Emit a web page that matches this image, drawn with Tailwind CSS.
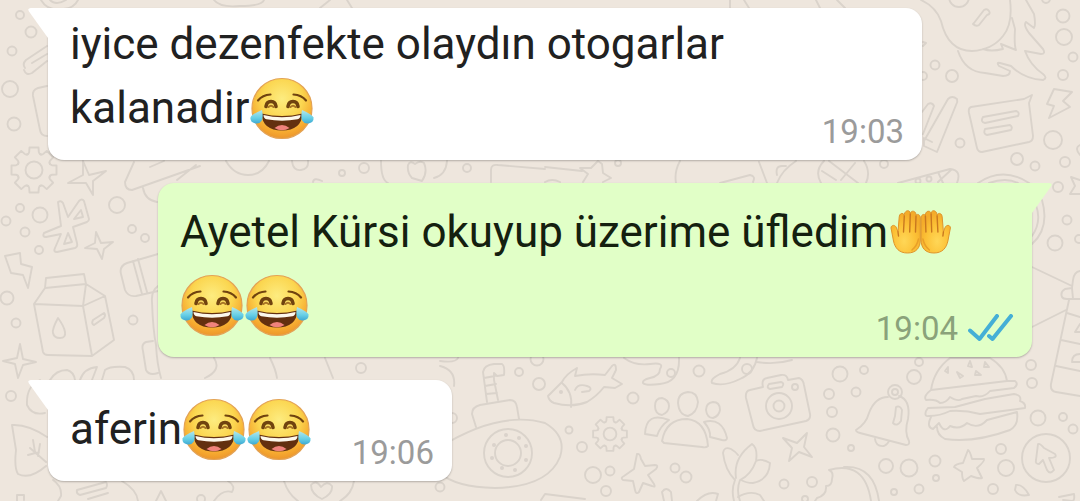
<!DOCTYPE html>
<html lang="tr">
<head>
    <meta charset="UTF-8">
    <meta name="viewport" content="width=device-width, initial-scale=1.0">
    <script src="https://cdn.jsdelivr.net/npm/@tailwindcss/browser@4"></script>
    <title>Sohbet</title>
</head>

<body class="bg-[#eee6dd] min-h-screen overflow-hidden relative font-['Roboto',sans-serif] text-[44px] leading-[51px] text-[#212121]">

    <!-- shared drawings -->
    <svg class="absolute w-0 h-0" aria-hidden="true">
        <defs>
            <radialGradient id="skin" cx="50%" cy="34%" r="68%">
                <stop offset="0" stop-color="#fdec80"/>
                <stop offset=".5" stop-color="#fbd650"/>
                <stop offset=".82" stop-color="#f6a92f"/>
                <stop offset="1" stop-color="#ea922c"/>
            </radialGradient>
            <linearGradient id="tear" x1="0" y1="0" x2="0" y2="1">
                <stop offset="0" stop-color="#b5e6ea"/>
                <stop offset=".6" stop-color="#66cfe6"/>
                <stop offset="1" stop-color="#3fa9d2"/>
            </linearGradient>
            <radialGradient id="palm" cx="45%" cy="72%" r="65%">
                <stop offset="0" stop-color="#ffd757"/>
                <stop offset=".6" stop-color="#fcc136"/>
                <stop offset="1" stop-color="#f4ac2a"/>
            </radialGradient>
        </defs>
        <symbol id="joy" viewBox="0 0 65 73">
            <circle cx="32" cy="38.500" r="30" fill="url(#skin)" stroke="#e3a255" stroke-width="1.200"/>
            <g fill="none" stroke="#70430f" stroke-linecap="round">
                <path d="M8 30.500Q12.500 25 20.500 24.500M56 30.500Q51.500 25 43.500 24.500" stroke-width="2.200"/>
                <path d="M16 36.500Q16.500 31.500 21 31.500T26 36.500M38 36.500Q38.500 31.500 43 31.500T48 36.500" stroke-width="3.600"/>
                <path d="M18.500 37Q21 34.500 23.500 37M40.500 37Q43 34.500 45.500 37" stroke-width="1.800" stroke="#a87526"/>
            </g>
            <path d="M11.500 43.500Q32 48.500 52.500 43.500Q51.500 60.500 32 60.500T11.500 43.500Z" fill="#63300f"/>
            <path d="M13.500 45Q32 49.500 50.500 45Q50.500 48.500 47.500 49.300Q32 52 16.500 49.300Q13.500 48.500 13.500 45Z" fill="#fdf8ec"/>
            <path d="M24.500 58Q32 52 39.500 58Q36 60.200 32 60.200T24.500 58Z" fill="#f0837c"/>
            <path d="M12 40Q13.500 47 11.800 50.500A6 5.500 0 0 1 .5 47.500Q1.500 44.500 12 40Z" fill="url(#tear)"/>
            <path d="M12 40Q13.500 47 11.800 50.500A6 5.500 0 0 1 .5 47.500Q1.500 44.500 12 40Z" fill="url(#tear)" transform="translate(64 0) scale(-1 1)"/>
        </symbol>
        <symbol id="hands" viewBox="0 0 65 73">
            <g id="hand">
                <path d="M3 34C3 30.500 7.500 30.500 8.500 34L10 38L11.200 23C11.400 18.500 16 18.500 16.200 21.500C16.500 15.500 22.300 15.500 22.300 19.500C23 16 28 16.500 28 21C30 19.500 32.300 21 32.300 24V46C32.300 54 28 59 19.500 59C11 59 7 54 5.500 47Z" fill="url(#palm)" stroke="#df942b" stroke-width="1"/>
                <path d="M16.300 22L15.500 38M22.300 20L21.700 38M28 22L27.500 38M10 38L10.500 42" fill="none" stroke="#c9781f" stroke-width="1.400" stroke-linecap="round"/>
                <path d="M24 56Q29 52 30.500 45" fill="none" stroke="#e9a028" stroke-width="1.500" stroke-linecap="round"/>
            </g>
            <use href="#hand" transform="translate(65.400 0) scale(-1 1)"/>
        </symbol>
        <symbol id="gear" viewBox="-24 -24 48 48" overflow="visible">
            <path id="tooth" d="M-7-15.500Q-5-16-4.800-18L-4.500-22.500H4.500L4.800-18Q5-16 7-15.500"/>
            <use href="#tooth" transform="rotate(45)"/><use href="#tooth" transform="rotate(90)"/>
            <use href="#tooth" transform="rotate(135)"/><use href="#tooth" transform="rotate(180)"/>
            <use href="#tooth" transform="rotate(225)"/><use href="#tooth" transform="rotate(270)"/>
            <use href="#tooth" transform="rotate(315)"/>
            <circle r="8.500"/>
        </symbol>
        <symbol id="tail" viewBox="0 0 21 32">
            <path d="M21 0H3Q-1 0 1 3.500L20 30H21Z" fill="currentColor"/>
        </symbol>
    </svg>

    <!-- wallpaper doodles -->
    <svg class="absolute top-0 left-0 w-[1080px] h-[501px]" viewBox="0 0 1080 501" fill="none" stroke="#dad3cb" stroke-width="1.900" stroke-linejoin="round" stroke-linecap="round" aria-hidden="true">
        <!-- bubbles, left side -->
        <circle cx="20" cy="15" r="4"/><circle cx="31" cy="32" r="5.500"/><circle cx="12" cy="51" r="4.500"/>
        <circle cx="10" cy="89" r="8"/><circle cx="14" cy="124" r="6.500"/>
        <circle cx="20" cy="208" r="4"/><circle cx="40" cy="215" r="7.500"/><circle cx="6" cy="221" r="4.500"/>
        <circle cx="25" cy="232" r="4.500"/><circle cx="39" cy="250" r="4"/><circle cx="117" cy="205" r="8"/>
        <circle cx="132" cy="229" r="4"/><circle cx="145" cy="238" r="4"/><circle cx="133" cy="320" r="4.500"/>
        <circle cx="7" cy="298" r="6.500"/><circle cx="16" cy="323" r="4.500"/><circle cx="11" cy="396" r="5"/>
        <!-- top edge -->
        <path d="M41 0Q48 12 64 9Q74 8 78 0M50 0Q56 6 66 0M214 0Q220 8 240 6Q262 6 264 0M320 8L330 0M347 0L352 8M730 0V8M744 0L749 8M816 0L820 8M837 0L845 8"/>
        <!-- pencil and phone behind the first message -->
        <path d="M47 46L26 60Q22 64 25 68M47 54L32 63M47 61L32 73Q26 76 24 70M47 86L38 88Q32 90 33 96L40 130Q41 136 47 136"/>
        <use href="#gear" x="10" y="146" width="48" height="48"/>
        <!-- sparkles -->
        <path d="M83 161L89 175L106 171L93 181L93 195L86 183L68 183L83 175Z"/>
        <path d="M96 232L101 243L113 242L104 249L102 259L97 249L85 248L95 243Z"/>
        <path d="M20 344L23 359L36 362L23 365L18 378L15 364L3 361L17 358Z"/>
        <path d="M783 438L797 443L807 433L804 447L812 457L799 452L789 461L792 448Z"/>
        <!-- bluetooth, bolts -->
        <path d="M58 202Q61 200 63 203L68 217L79 201Q82 198 84 201L89 219Q89 221 87 222L73 227L77 243Q78 247 75 248L57 252Q53 252 55 248L61 234L46 237Q42 237 44 233L61 226ZM74 219L81 210L83 217ZM64 244L68 233L72 242Z"/>
        <path d="M5 256L20 253L21 264L32 267L28 288L23 275L11 273Z"/>
        <path d="M1054 89L1072 92L1063 101L1070 107L1049 118L1054 106L1047 104Z"/>
        <!-- milk carton -->
        <path d="M46 278L84 274L86 284L45 288ZM45 288L34 304L43 352Q44 355 48 355L92 356L114 340L105 296L86 284L83 306L34 304M83 306L105 296M83 306L92 356M93 320L104 313Q106 315 104 318L94 325Q91 324 93 320ZM58 318Q52 329 53 333Q54 338 60 338T65 332Q64 326 58 318Z"/>
        <!-- jar and rocket parts -->
        <path d="M158 254L127 263Q119 266 121 274L125 290Q128 297 136 296L158 291M133 261L142 294M138 259L147 292M158 286Q151 291 152 302Q153 330 156 345Q157 364 161 378M153 341L146 342Q141 344 143 351L146 370Q149 376 158 373"/>
        <path d="M134 162L125 182Q125 190 132 190L200 166M150 167L164 161M143 188Q145 200 157 202M177 180L196 165M226 161Q234 175 248 175T269 161M292 161Q293 171 301 170T308 161M381 161Q381 180 388 183M447 161Q446 175 434 178M408 165Q410 160 415 164Q420 160 424 163Q428 172 422 181L412 178Q407 173 408 165ZM491 182V170Q491 164 498 165L545 169M313 182Q314 177 322 181"/>
        <circle cx="342" cy="173" r="3"/><circle cx="364" cy="168" r="5"/><circle cx="467" cy="168" r="4"/>
        <!-- strip between the first two messages -->
        <path d="M545 167L582 171M583 182L588 174L580 168L591 168L598 161L602 164L603 173L611 178L603 182M545 182Q552 178 560 182M680 161Q674 172 676 183M720 183L750 175Q756 176 753 182M759 162L767 183M796 161Q782 170 777 183M777 175Q775 166 782 166L786 166M824 161Q814 171 821 183M864 161Q871 172 866 183M829 161L858 183M822 171L836 180M855 163L841 180M898 183L950 169Q962 170 957 183M938 172L943 183M951 170L938 182M978 183Q1003 166 1029 183M989 183Q1006 177 1018 183"/>
        <circle cx="884" cy="164" r="4"/><circle cx="918" cy="181" r="2.500"/><circle cx="929" cy="179" r="2.500"/><circle cx="618" cy="163" r="3"/>
        <!-- rocket with flames -->
        <path d="M921 0Q936 7 941 21Q948 51 972 51Q992 50 1003 36Q1013 24 1010 0M958 51Q965 72 985 73L1003 76Q1010 76 1010 71L999 66Q996 62 1000 63L1011 66Q1024 79 1043 80Q1048 78 1043 74Q1030 65 1025 51L1041 54Q1046 54 1043 49L1029 33Q1023 25 1026 22L1034 28Q1036 25 1034 14L1026 0M983 49Q991 52 1003 49L1001 44L1016 50Q1014 45 1015 29L1012 18"/>
        <path d="M974 23L984 10Q987 8 989 11T987 15L979 25Q976 27 973 24Z"/>
        <circle cx="959" cy="-3" r="10"/><circle cx="1046" cy="-1" r="4"/>
        <circle cx="1063" cy="16" r="6.500"/><circle cx="1064" cy="37" r="8"/><circle cx="1073" cy="57" r="4.500"/>
        <circle cx="1063" cy="75" r="5"/><circle cx="935" cy="65" r="4.500"/><circle cx="952" cy="76" r="6"/>
        <circle cx="923" cy="76" r="4"/><circle cx="960" cy="143" r="4.500"/><circle cx="1053" cy="140" r="9"/>
        <circle cx="1017" cy="159" r="6"/><circle cx="1035" cy="166" r="4.500"/><circle cx="1065" cy="162" r="5"/>
        <path d="M1080 145Q1074 148 1080 155M923 42L926 43L923 46"/>
        <!-- felt pens and note -->
        <path d="M922 112L928 104Q932 102 934 106L923 134M924 141L948 99Q952 95 957 99Q958 102 956 105L937 152L924 146V138L932 142"/>
        <path d="M971 107L1024 99L1032 95L1029 103L1033 136Q1033 141 1029 142L982 152Q978 152 977 148L969 113Q968 108 971 107Z"/>
        <path d="M983 117L1016 111Q1020 112 1018 116L985 123Q980 122 983 117ZM985 129L1010 125Q1013 127 1011 130L987 135Q983 134 985 129Z"/>
        <!-- right edge -->
        <circle cx="1058" cy="187" r="5"/><circle cx="1067" cy="220" r="4.500"/><circle cx="1055" cy="243" r="7.500"/><circle cx="1079" cy="239" r="4"/>
        <path d="M1080 180L1071 177L1075 186L1070 194L1080 194M1042 200Q1050 228 1032 244M1036 205Q1042 222 1032 236M1032 267L1072 286M1032 327L1066 310M1080 271Q1074 272 1073 280L1072 288L1065 289Q1060 292 1062 297Q1063 299 1067 299H1080M1072 288L1073 299M1069 300L1051 384Q1050 391 1056 392L1080 396M1067 313L1080 317M1061 340L1080 344M1056 366L1080 371M1080 324L1075 332H1080M1080 354Q1072 354 1072 362H1080"/>
        <!-- below the second message -->
        <circle cx="1031" cy="365" r="5"/><circle cx="1032" cy="383" r="5"/><circle cx="1038" cy="418" r="7.500"/>
        <circle cx="1063" cy="417" r="4"/><circle cx="1073" cy="429" r="4.500"/><circle cx="919" cy="362" r="4"/>
        <circle cx="914" cy="377" r="7"/><circle cx="840" cy="374" r="7.500"/><circle cx="864" cy="370" r="4"/>
        <circle cx="829" cy="394" r="5"/><circle cx="856" cy="392" r="4.500"/><circle cx="832" cy="412" r="5"/>
        <circle cx="833" cy="435" r="6.500"/><circle cx="851" cy="448" r="3"/><circle cx="886" cy="466" r="7"/>
        <circle cx="909" cy="468" r="8.500"/><circle cx="935" cy="461" r="5.500"/><circle cx="936" cy="478" r="3"/>
        <circle cx="919" cy="489" r="4.500"/><circle cx="894" cy="492" r="3"/><circle cx="1001" cy="449" r="5"/>
        <circle cx="1006" cy="468" r="8"/><circle cx="993" cy="489" r="5"/><circle cx="784" cy="484" r="4.500"/>
        <circle cx="812" cy="482" r="5"/><circle cx="805" cy="499" r="3"/>
        <circle cx="537" cy="359" r="6.500"/><circle cx="519" cy="372" r="4"/><circle cx="539" cy="384" r="6"/>
        <circle cx="633" cy="398" r="5.500"/><circle cx="569" cy="430" r="3.500"/><circle cx="582" cy="447" r="5"/>
        <circle cx="593" cy="475" r="8"/><circle cx="610" cy="471" r="4.500"/><circle cx="606" cy="491" r="5"/>
        <circle cx="675" cy="468" r="4.500"/><circle cx="686" cy="477" r="5.500"/><circle cx="699" cy="371" r="5.500"/>
        <circle cx="671" cy="373" r="4"/><circle cx="747" cy="369" r="5"/><circle cx="452" cy="418" r="5"/>
        <circle cx="440" cy="487" r="4.500"/>
        <path d="M624 358Q635 366 650 364T660 369Q660 376 650 378Q642 380 643 383Q646 386 660 384Q680 382 679 358M740 358Q736 370 720 374Q710 379 712 383Q724 387 740 379Q754 373 757 358M757 362Q775 365 792 360"/>
        <!-- submarine -->
        <path d="M440 447Q500 410 545 423Q567 436 560 457Q548 487 495 488Q455 487 440 473M476 427L472 414Q472 407 480 405L510 400Q516 400 517 407L519 419M487 402L483 372Q484 365 494 364L502 364Q505 366 504 375L497 376L494 373V380L498 400M484 378L495 376M485 386L496 384M486 394L497 393"/>
        <circle cx="508" cy="453" r="24"/><circle cx="508" cy="453" r="13"/>
        <g fill="#dad3cb" stroke="none">
            <circle cx="506" cy="435" r="2"/><circle cx="519" cy="438" r="2"/><circle cx="526" cy="446" r="2"/>
            <circle cx="526" cy="460" r="2"/><circle cx="515" cy="470" r="2"/><circle cx="502" cy="468" r="2"/>
            <circle cx="492" cy="458" r="2"/><circle cx="494" cy="445" r="2"/><circle cx="561" cy="392" r="2"/>
        </g>
        <path d="M440 361Q456 363 458 358M440 366Q456 370 454 386M541 500L545 494L585 499M664 501L662 492Q666 486 671 492L672 501M697 501Q708 490 718 494L716 501"/>
        <!-- fish -->
        <path d="M548 396Q549 401 554 403Q572 408 587 402Q597 396 604 387L615 388L622 384L612 378L616 370Q616 362 612 366L605 375Q590 373 575 376L577 368Q566 374 562 382ZM562 383Q573 392 571 407M575 390Q578 383 587 386Q593 388 589 391L582 392"/>
        <svg x="592" y="416" width="36" height="36" viewBox="-24 -24 48 48" overflow="visible" stroke-width="2.500"><use href="#gear" x="-24" y="-24" width="48" height="48"/></svg>
        <!-- starfish and star -->
        <path d="M637 454Q640 453 641 459L645 466L655 465Q659 465 656 469L648 475L654 484Q656 488 652 486L643 483L639 492Q636 495 635 490L633 481L623 480Q620 478 624 476L634 469Z"/>
        <path d="M968 450Q970 451 972 459L984 459Q985 461 977 468L982 478Q979 479 971 476L964 481Q962 479 962 472L954 467Q955 464 963 463Z"/>
        <!-- people -->
        <path d="M662 398Q655 398 655 406T662 415Q669 412 669 406T662 398ZM688 392Q678 393 678 403Q679 415 688 416Q697 413 698 402Q697 392 688 392ZM713 402Q706 403 706 410Q707 418 713 418Q719 416 720 410Q720 402 713 402ZM662 441Q666 419 687 419Q706 421 708 446Q706 448 702 447L664 443ZM669 420Q646 411 645 434L657 436Q660 426 669 420ZM704 422Q722 417 727 438Q727 441 722 440L710 437Q711 430 704 422Z"/>
        <!-- camera -->
        <path d="M750 390L763 387Q761 379 767 378L781 375Q787 374 788 380L799 378Q803 379 804 385L810 414Q811 419 806 421L760 431Q754 431 753 425L746 398Q745 391 750 390ZM769 384L781 382Q785 383 782 387L770 389Q766 388 769 384Z"/>
        <circle cx="779" cy="406" r="13"/><circle cx="779" cy="406" r="5.500"/><circle cx="795" cy="387" r="3"/>
        <!-- bell -->
        <path d="M888 397Q875 397 869 413Q866 424 856 430Q856 432 860 433L906 445Q910 445 909 441Q904 432 908 419Q911 400 899 396M875 439Q876 447 884 446Q888 444 889 441M896 407Q900 405 902 410L901 421Q897 427 893 423L895 416Z"/>
        <circle cx="895" cy="392" r="7"/><circle cx="895" cy="392" r="3"/>
        <!-- burger -->
        <path d="M931 390Q934 370 950 358H990Q1005 367 1007 381ZM931 390Q923 396 926 400Q936 399 940 403Q946 403 950 397Q958 402 962 399L976 396Q984 398 990 391L1014 388Q1019 384 1015 381H1007M926 411Q924 417 929 416Q940 416 950 411Q965 410 980 414L1025 408Q1026 403 1020 401Q1022 395 1014 394L985 399L955 407L928 408ZM931 417Q926 427 933 429L939 423Q944 434 950 426Q960 430 967 423Q978 430 987 420L1017 412Q1019 425 1010 430Q975 443 945 439Q937 435 937 427"/>
        <path d="M948 367L945 371L948 373ZM970 361L968 366L972 367ZM985 362L989 367L984 367ZM957 372L963 376L960 378ZM976 371L981 375L975 375Z"/>
        <!-- cursor badge -->
        <circle cx="1046" cy="458" r="24"/>
        <path d="M1038 444Q1040 443 1044 448L1055 454Q1058 458 1049 458L1054 470Q1050 475 1047 470L1043 460L1039 464Q1035 464 1036 460Z"/>
        <!-- plant, cookie, leaves -->
        <path d="M735 480Q725 470 723 453Q724 446 731 449Q736 452 738 455M736 478Q733 458 752 444Q758 448 756 461Q751 475 740 480Q736 490 740 501M735 480Q731 490 734 501M756 461Q762 458 770 463Q769 480 753 483Q746 483 741 480M738 497Q750 490 760 495L764 501"/>
        <path d="M829 470Q834 472 832 479Q832 486 826 486Q827 495 817 498L815 501M829 470Q865 460 871 501M844 467Q874 465 879 501M1016 485Q1023 484 1029 495Q1018 497 1015 490ZM1059 497L1074 494Q1075 501 1072 501L1063 500"/>
        <!-- bottom left -->
        <path d="M12 425L16 450Q14 468 18 474Q30 480 46 466M12 425Q28 424 47 437M30 448L46 462M28 455L39 452M33 440L35 452M40 444L38 456M17 501V495H24V500M22 501M50 380Q56 370 67 370Q74 372 75 380M80 380Q84 368 97 367L92 380M102 380L105 370Q110 366 125 367Q134 370 134 380M40 380Q26 386 27 405Q32 416 45 413M53 480Q62 486 61 496L58 501M77 490L106 482Q108 485 106 488L80 495Q76 494 77 490ZM88 499L108 493M122 481Q137 490 138 501M156 501L161 491L166 501M214 358Q222 370 205 378M270 358Q276 370 277 378M325 358L333 378"/>
        <path d="M311 485Q316 479 321 487Q327 480 332 486Q333 494 322 499Q311 494 311 485ZM284 481Q288 494 298 501M228 481Q236 486 232 492Q222 489 214 501M340 501Q352 494 354 481"/>
        <circle cx="201" cy="499" r="4"/><circle cx="361" cy="368" r="5"/>
    </svg>

    <main class="relative pt-2 px-12 flex flex-col gap-[23px]">

        <div class="self-start relative mr-[110px] bg-white rounded-[16px] rounded-tl-none pt-[11px] pb-[17px] px-[22px] shadow-[0_1px_2px_#00000040]">
            <svg class="absolute top-0 -left-5 w-[21px] h-8 text-white" aria-hidden="true"><use href="#tail"/></svg>
            <p>iyice dezenfekte olaydın otogarlar kalanadir<svg class="inline-block w-[65px] h-[73px] align-[-20px]" role="img" aria-label="😂"><use href="#joy"/></svg></p>
            <time class="absolute right-[18px] bottom-[9px] text-[33px] leading-[39px] text-[#9b9b9b]">19:03</time>
        </div>

        <div class="self-end relative ml-[110px] bg-[#e1ffc7] rounded-[16px] rounded-tr-none pt-[11px] pb-[17px] px-[22px] text-[#14200f] shadow-[0_1px_2px_#00000040]">
            <svg class="absolute top-0 -right-5 w-[21px] h-8 -scale-x-100 text-[#e1ffc7]" aria-hidden="true"><use href="#tail"/></svg>
            <p>Ayetel Kürsi okuyup üzerime üfledim<svg class="inline-block w-[65px] h-[73px] align-[-20px]" role="img" aria-label="🤲"><use href="#hands"/></svg><svg class="inline-block w-[65px] h-[73px] align-[-20px]" role="img" aria-label="😂"><use href="#joy"/></svg><svg class="inline-block w-[65px] h-[73px] align-[-20px]" role="img" aria-label="😂"><use href="#joy"/></svg></p>
            <div class="absolute right-[18px] bottom-[9px] flex items-center gap-2.5 text-[33px] leading-[39px] text-[#8aa27a]">
                <time>19:04</time>
                <svg class="w-[46px] h-[30px]" viewBox="0 0 46 30" fill="none" stroke="#45afd6" stroke-width="4" stroke-linecap="round" stroke-linejoin="round" role="img" aria-label="Okundu">
                    <path d="M2 16.500L11.500 25L29 2M21 22L24.500 25L43 2"/>
                </svg>
            </div>
        </div>

        <div class="self-start relative mr-[110px] bg-white rounded-[16px] rounded-tl-none pt-[11px] pb-[17px] px-[22px] shadow-[0_1px_2px_#00000040]">
            <svg class="absolute top-0 -left-5 w-[21px] h-8 text-white" aria-hidden="true"><use href="#tail"/></svg>
            <p>aferin<svg class="inline-block w-[65px] h-[73px] align-[-20px]" role="img" aria-label="😂"><use href="#joy"/></svg><svg class="inline-block w-[65px] h-[73px] align-[-20px]" role="img" aria-label="😂"><use href="#joy"/></svg><span class="inline-block w-[118px]"></span></p>
            <time class="absolute right-[18px] bottom-[9px] text-[33px] leading-[39px] text-[#9b9b9b]">19:06</time>
        </div>

    </main>

</body>
</html>
